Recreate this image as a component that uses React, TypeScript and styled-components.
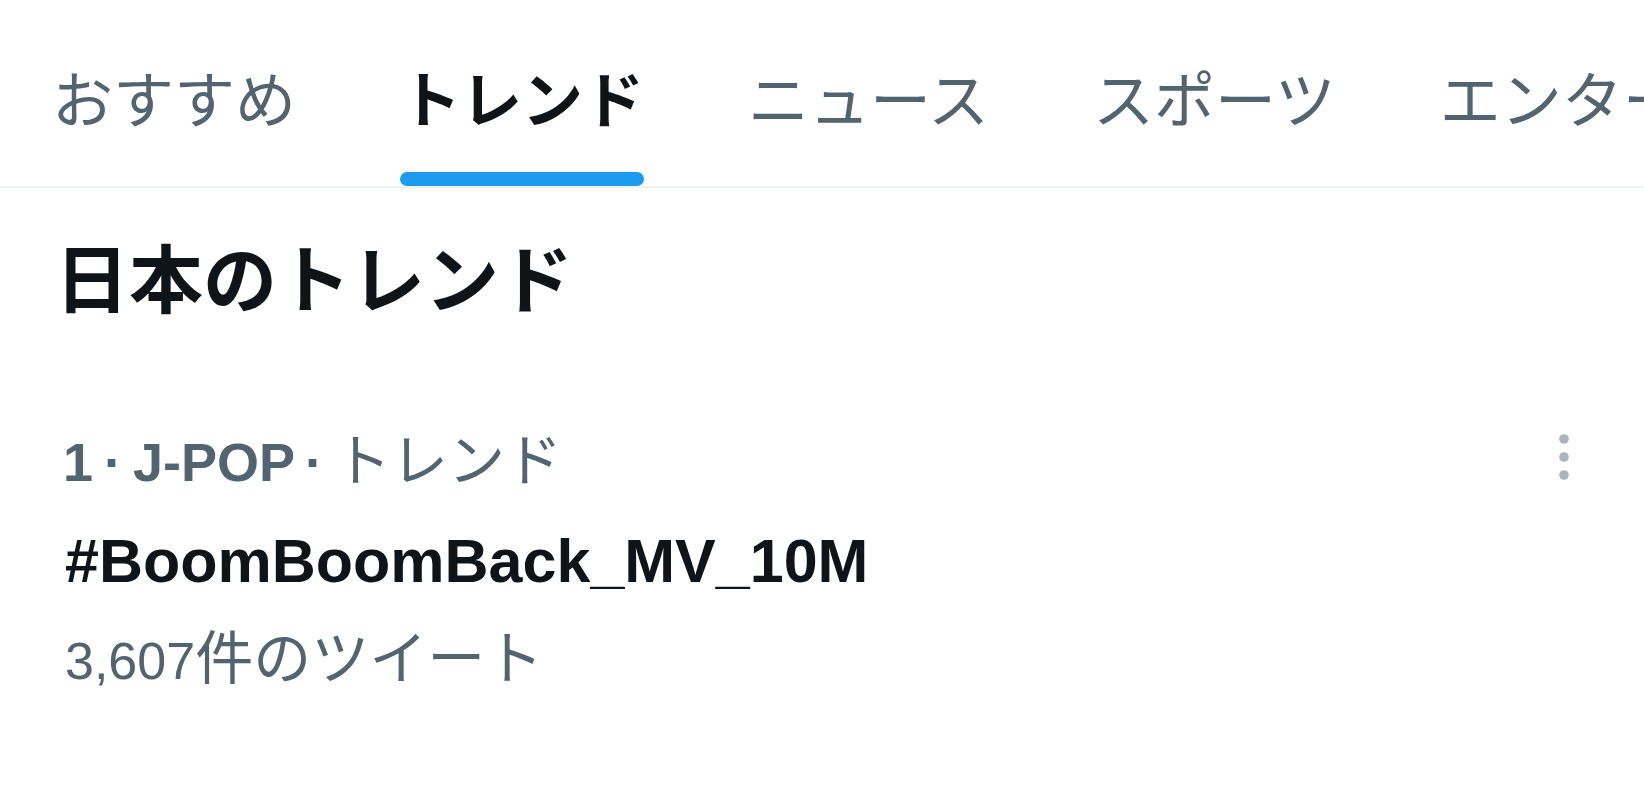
import React from "react";
import styled, { createGlobalStyle } from "styled-components";

const GlobalStyle = createGlobalStyle`
  html, body {
    margin: 0;
    padding: 0;
    background: #ffffff;
  }
  body {
    font-family: "Liberation Sans", "Noto Sans CJK JP", sans-serif;
    -webkit-font-smoothing: antialiased;
  }
`;

const Page = styled.div`
  width: 1644px;
  height: 788px;
  overflow: hidden;
  background: #ffffff;
`;

const TabBar = styled.nav`
  display: flex;
  gap: 94px;
  padding-left: 47px;
  border-bottom: 2px solid #eff3f4;
  white-space: nowrap;
  overflow: hidden;
`;

const Tab = styled.div`
  display: flex;
  flex-direction: column;
  align-items: stretch;
  padding: 66px 5px 0;
  flex-shrink: 0;
`;

const TabLabel = styled.span<{ $active?: boolean }>`
  font-family: "Noto Sans CJK JP", sans-serif;
  font-size: 61px;
  line-height: 61px;
  font-weight: ${(p) => (p.$active ? 700 : 400)};
  color: ${(p) => (p.$active ? "#0f1419" : "#536471")};
`;

const Indicator = styled.div<{ $active?: boolean }>`
  margin-top: 45px;
  height: 14px;
  border-radius: 7px;
  background: ${(p) => (p.$active ? "#1d9bf0" : "transparent")};
`;

const SectionTitle = styled.h2`
  margin: 50px 0 0 55px;
  font-family: "Noto Sans CJK JP", sans-serif;
  font-size: 74px;
  line-height: 74px;
  font-weight: 700;
  color: #0f1419;
`;

const TrendRow = styled.div`
  display: flex;
  justify-content: space-between;
  align-items: flex-start;
  padding: 0 68px 0 63px;
  margin-top: 112px;
`;

const TrendBody = styled.div`
  display: flex;
  flex-direction: column;
`;

const Meta = styled.div`
  font-size: 54px;
  line-height: 64px;
  color: #536471;
  white-space: nowrap;
`;

const MetaStrong = styled.span`
  font-weight: 700;
  word-spacing: -4px;
`;

const CjkText = styled.span<{ $size: number }>`
  font-family: "Noto Sans CJK JP", sans-serif;
  font-weight: 400;
  font-size: ${(p) => p.$size}px;
`;

const Hashtag = styled.div`
  margin-top: 31px;
  margin-left: 2px;
  font-size: 61px;
  line-height: 72px;
  font-weight: 700;
  color: #0f1419;
`;

const Count = styled.div`
  margin-top: 25px;
  margin-left: 2px;
  font-size: 52px;
  line-height: 64px;
  color: #536471;
  white-space: nowrap;
`;

const MoreButton = styled.button`
  border: none;
  background: transparent;
  padding: 0;
  margin: 4px 0 0;
  display: flex;
  cursor: pointer;
`;

const MoreIcon = () => (
  <svg width="24" height="60" viewBox="0 0 24 60" aria-hidden="true">
    <circle cx="12" cy="11" r="4.8" fill="#aab4bc" />
    <circle cx="12" cy="29" r="4.8" fill="#aab4bc" />
    <circle cx="12" cy="47" r="4.8" fill="#aab4bc" />
  </svg>
);

const tabs = [
  { label: "おすすめ", active: false },
  { label: "トレンド", active: true },
  { label: "ニュース", active: false },
  { label: "スポーツ", active: false },
  { label: "エンターテイメント", active: false },
];

export default function App() {
  return (
    <>
      <GlobalStyle />
      <Page>
        <TabBar>
          {tabs.map((t) => (
            <Tab key={t.label}>
              <TabLabel $active={t.active}>{t.label}</TabLabel>
              <Indicator $active={t.active} />
            </Tab>
          ))}
        </TabBar>
        <SectionTitle>日本のトレンド</SectionTitle>
        <TrendRow>
          <TrendBody>
            <Meta>
              <MetaStrong>1 · J-POP · </MetaStrong>
              <CjkText $size={57}>トレンド</CjkText>
            </Meta>
            <Hashtag>#BoomBoomBack_MV_10M</Hashtag>
            <Count>
              3,607<CjkText $size={58}>件のツイート</CjkText>
            </Count>
          </TrendBody>
          <MoreButton aria-label="その他">
            <MoreIcon />
          </MoreButton>
        </TrendRow>
      </Page>
    </>
  );
}
